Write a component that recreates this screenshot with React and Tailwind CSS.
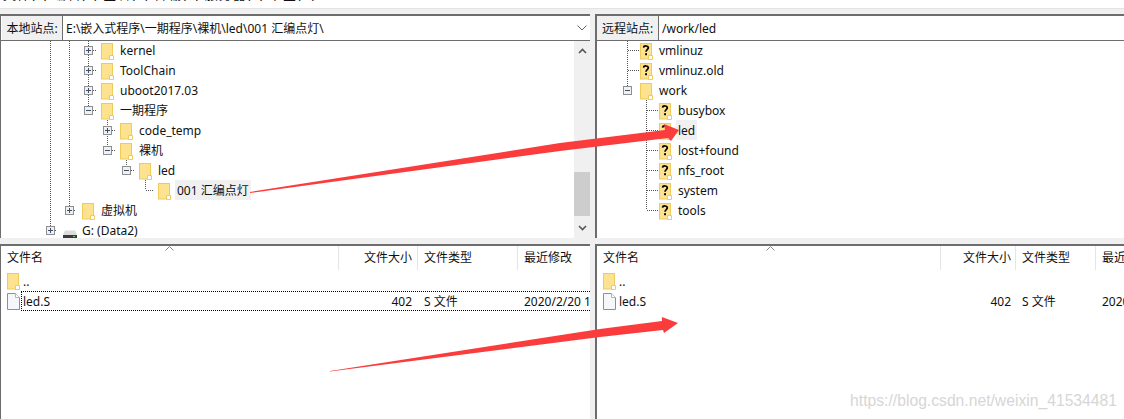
const FONT = "font-['Noto_Sans','Noto_Sans_CJK_SC',sans-serif]";

function Folder() {
  return (
    <svg width="13" height="17" viewBox="0 0 13 17" className="shrink-0 block">
      <rect x="0.5" y="0.5" width="11" height="15.5" fill="#fde28f" stroke="#eecb5a" />
      <path d="M8.5 16.5V12.5H12.5V16.5Z" fill="#fff" stroke="#eecb5a" />
    </svg>
  );
}

function Unknown() {
  return (
    <svg width="13" height="17" viewBox="0 0 13 17" className="shrink-0 block">
      <rect x="0.5" y="0.5" width="11" height="15.5" fill="#fde28f" stroke="#eecb5a" />
      <path d="M8.5 16.5V12.5H12.5V16.5Z" fill="#fff" stroke="#eecb5a" />
      <path d="M3.6 4.6C3.8 2.4 8.2 2.4 8.3 4.8C8.3 6.6 6 6.6 6 8.8" fill="none" stroke="#000" strokeWidth="1.7" />
      <rect x="5.1" y="10.2" width="1.9" height="2" fill="#000" />
    </svg>
  );
}

function Drive() {
  return (
    <svg width="14" height="9" viewBox="0 0 14 9" className="shrink-0 block">
      <path d="M2 0.5H12L14 5H0Z" fill="#dcdcdc" />
      <rect x="0" y="5" width="14" height="4" fill="#3a3a3a" />
      <rect x="10" y="6" width="2" height="1" fill="#5fd35f" />
    </svg>
  );
}

function FileIcon() {
  return (
    <svg width="13" height="17" viewBox="0 0 13 17" className="shrink-0 block">
      <path d="M0.5 0.5H8.5L12.5 4.5V16.5H0.5Z" fill="#f6f7fa" stroke="#8f8f8f" />
      <path d="M8.5 0.5V4.5H12.5" fill="#fff" stroke="#b5b5b5" />
    </svg>
  );
}

function Expander({ open }) {
  return (
    <span className="w-[9px] h-[9px] border border-[#8e8f8f] bg-[#f0f0f0] flex items-center justify-center relative shrink-0">
      <span className="w-[5px] h-px bg-[#3d4f6b]" />
      {!open && <span className="absolute w-px h-[5px] bg-[#3d4f6b]" />}
    </span>
  );
}

function TreeRow({ x, exp, icon, label, selected }) {
  return (
    <div className="h-5 relative">
      {exp && (
        <span className="absolute top-[6px]" style={{ left: x - 17 }}>
          <Expander open={exp === "open"} />
        </span>
      )}
      <span className="absolute top-[3px]" style={{ left: x }}>
        {icon}
      </span>
      <span
        className={"absolute top-0 h-5 leading-[22px] px-0.5 whitespace-nowrap " + (selected ? "bg-[#f0f0f0]" : "")}
        style={{ left: x + 17 }}
      >
        {label}
      </span>
    </div>
  );
}

function TreeLines({ d, width }) {
  return (
    <svg className="absolute left-0 top-0" width={width} height="197">
      <path d={d} fill="none" stroke="#555" strokeDasharray="1 1" shapeRendering="crispEdges" />
    </svg>
  );
}

function AddressBar({ label, value, labelW, chevron, inset }) {
  return (
    <div className={"h-[25px] shrink-0 flex items-stretch border-b border-[#6d6d6d] bg-white " + (inset ? "pl-px" : "")}>
      <div
        className="bg-[#f0f0f0] border-r border-[#6d6d6d] flex items-center justify-center pt-px text-[12px] shrink-0"
        style={{ width: labelW }}
      >
        {label}
      </div>
      <div className="flex-1 flex items-center pl-[3px] pt-px text-[12px] whitespace-nowrap overflow-hidden">{value}</div>
      {chevron && (
        <svg width="10" height="6" viewBox="0 0 10 6" className="self-center mr-[3px] ml-2">
          <path d="M0.5 0.5L5 5L9.5 0.5" fill="none" stroke="#666" />
        </svg>
      )}
    </div>
  );
}

function ListRow({ icon, cells, focus, cols }) {
  return (
    <div className="h-5 flex items-center relative">
      <span className="w-[22px] pl-[6px] shrink-0">{icon}</span>
      {cols.map((c, i) => (
        <span key={i} className={"shrink-0 whitespace-nowrap overflow-hidden leading-[22px] h-5 " + c.cls} style={{ width: c.w }}>
          {cells[i]}
        </span>
      ))}
      {focus && <span className="absolute left-5 right-0 top-0 bottom-0 border-y border-l border-black border-dotted" />}
    </div>
  );
}

const leftCols = [
  { w: 316, cls: "" },
  { w: 79, cls: "text-right pr-[6px]" },
  { w: 100, cls: "pl-[6px]" },
  { w: 72, cls: "pl-[6px]" },
];
const rightCols = [
  { w: 322, cls: "" },
  { w: 75, cls: "text-right pr-[5px]" },
  { w: 80, cls: "pl-[6px]" },
  { w: 28, cls: "pl-[6px]" },
];

function ListHeader({ cols, labels, caret }) {
  return (
    <div className="h-[25px] flex items-start relative">
      <span className="absolute top-0" style={{ left: caret }}>
        <svg width="9" height="5" viewBox="0 0 9 5" className="block">
          <path d="M0.5 4.5L4.5 0.5L8.5 4.5" fill="none" stroke="#888" />
        </svg>
      </span>
      {cols.map((c, i) => (
        <span
          key={i}
          className={"h-6 shrink-0 whitespace-nowrap overflow-hidden leading-6 " + c.cls}
          style={{ width: c.hw }}
        >
          {labels[i]}
        </span>
      ))}
    </div>
  );
}

const leftHead = [
  { hw: 338, cls: "pl-[6px] border-r border-[#e5e5e5]" },
  { hw: 79, cls: "text-right pr-[5px] border-r border-[#e5e5e5]" },
  { hw: 100, cls: "pl-[6px] border-r border-[#e5e5e5]" },
  { hw: 72, cls: "pl-[6px]" },
];
const rightHead = [
  { hw: 344, cls: "pl-[6px] border-r border-[#e5e5e5]" },
  { hw: 75, cls: "text-right pr-[4px] border-r border-[#e5e5e5]" },
  { hw: 80, cls: "pl-[6px] border-r border-[#e5e5e5]" },
  { hw: 28, cls: "pl-[6px]" },
];

export default function App() {
  return (
    <div className={FONT + " relative w-[1124px] h-[419px] overflow-hidden bg-[#f0f0f0] text-[12px] text-[#111]"}>
      <div className="h-[9px] bg-white border-b border-[#e3e3e3] overflow-hidden">
        <div className="-mt-[14px] pl-[3px] h-4 leading-4 whitespace-nowrap text-[13px] tracking-[1px]">
          文件(F) 编辑(E) 查看(V) 传输(T) 服务器(S) 书签(B)
        </div>
      </div>
      <div className="h-[5px]" />
      <div className="flex gap-[5px] h-[224px]">
        <div className="w-[590px] border-t-2 border-l border-[#6d6d6d] bg-white flex flex-col">
          <AddressBar label="本地站点:" labelW={61} inset chevron value="E:\嵌入式程序\一期程序\裸机\led\001 汇编点灯\" />
          <div className="flex flex-1 min-h-0 relative overflow-hidden">
            <TreeLines
              width={160}
              d="M49.5 0V189M49.5 189H56M68.5 0V169M68.5 169H75M87.5 0V69M87.5 9H95M87.5 29H95M87.5 49H95M87.5 69H95M106.5 75V109M106.5 89H114M106.5 109H114M125.5 115V129M125.5 129H133M144.5 135V149H152"
            />
            <div className="flex-1 -mt-px">
              <TreeRow x={100} exp="closed" icon={<Folder />} label="kernel" />
              <TreeRow x={100} exp="closed" icon={<Folder />} label="ToolChain" />
              <TreeRow x={100} exp="closed" icon={<Folder />} label="uboot2017.03" />
              <TreeRow x={100} exp="open" icon={<Folder />} label="一期程序" />
              <TreeRow x={119} exp="closed" icon={<Folder />} label="code_temp" />
              <TreeRow x={119} exp="open" icon={<Folder />} label="裸机" />
              <TreeRow x={138} exp="open" icon={<Folder />} label="led" />
              <TreeRow x={157} icon={<Folder />} label="001 汇编点灯" selected />
              <TreeRow x={81} exp="closed" icon={<Folder />} label="虚拟机" />
              <TreeRow
                x={62}
                exp="closed"
                icon={
                  <span className="block pt-[7px]">
                    <Drive />
                  </span>
                }
                label="G: (Data2)"
              />
            </div>
            <div className="w-[16px] bg-[#f0f0f0] flex flex-col items-center justify-between py-[7px] relative">
              <svg width="9" height="6" viewBox="0 0 9 6">
                <path d="M1 5L4.5 1.5L8 5" fill="none" stroke="#555" strokeWidth="1.6" />
              </svg>
              <span className="absolute left-0 right-0 top-[131px] h-[44px] bg-[#cdcdcd]" />
              <svg width="9" height="6" viewBox="0 0 9 6">
                <path d="M1 1L4.5 4.5L8 1" fill="none" stroke="#555" strokeWidth="1.6" />
              </svg>
            </div>
          </div>
        </div>
        <div className="flex-1 border-t-2 border-l-2 border-[#6d6d6d] bg-white flex flex-col">
          <AddressBar label="远程站点:" labelW={62} value="/work/led" />
          <div className="flex-1 min-h-0 relative overflow-hidden">
            <TreeLines
              width={160}
              d="M30.5 0V49M30.5 9H42M30.5 29H42M49.5 59V169M49.5 69H61M49.5 89H61M49.5 109H61M49.5 129H61M49.5 149H61M49.5 169H61"
            />
            <div className="-mt-px">
              <TreeRow x={43} icon={<Unknown />} label="vmlinuz" />
              <TreeRow x={43} icon={<Unknown />} label="vmlinuz.old" />
              <TreeRow x={43} exp="open" icon={<Folder />} label="work" />
              <TreeRow x={62} icon={<Unknown />} label="busybox" />
              <TreeRow x={62} icon={<Unknown />} label="led" selected />
              <TreeRow x={62} icon={<Unknown />} label="lost+found" />
              <TreeRow x={62} icon={<Unknown />} label="nfs_root" />
              <TreeRow x={62} icon={<Unknown />} label="system" />
              <TreeRow x={62} icon={<Unknown />} label="tools" />
            </div>
          </div>
        </div>
      </div>
      <div className="flex gap-[5px] h-[175px] mt-[6px]">
        <div className="w-[590px] border-t-2 border-l border-[#6d6d6d] bg-white overflow-hidden">
          <ListHeader cols={leftHead} labels={["文件名", "文件大小", "文件类型", "最近修改"]} caret={164} />
          <ListRow cols={leftCols} icon={<Folder />} cells={[".."]} />
          <ListRow cols={leftCols} icon={<FileIcon />} cells={["led.S", "402", "S 文件", "2020/2/20 1"]} focus />
        </div>
        <div className="flex-1 border-t-2 border-l-2 border-[#6d6d6d] bg-white overflow-hidden">
          <ListHeader cols={rightHead} labels={["文件名", "文件大小", "文件类型", "最近"]} caret={169} />
          <ListRow cols={rightCols} icon={<Folder />} cells={[".."]} />
          <ListRow cols={rightCols} icon={<FileIcon />} cells={["led.S", "402", "S 文件", "2020"]} />
        </div>
      </div>
      <svg className="absolute left-0 top-0" width="1124" height="419">
        <path d="M250 192L560 143L665 130L664 124L679 130L671 141L668 138L560 151L250 193Z" fill="#fb3c3c" />
        <path d="M330 371L600 329L662 321L662 317L678 323L664 333L663 330L600 337L330 371.5Z" fill="#fb3c3c" />
      </svg>
      <span className="absolute right-[7px] top-[391px] text-[15.7px] leading-5 text-[#d6d6d6] font-['Liberation_Sans',sans-serif]">
        https://blog.csdn.net/weixin_41534481
      </span>
    </div>
  );
}
